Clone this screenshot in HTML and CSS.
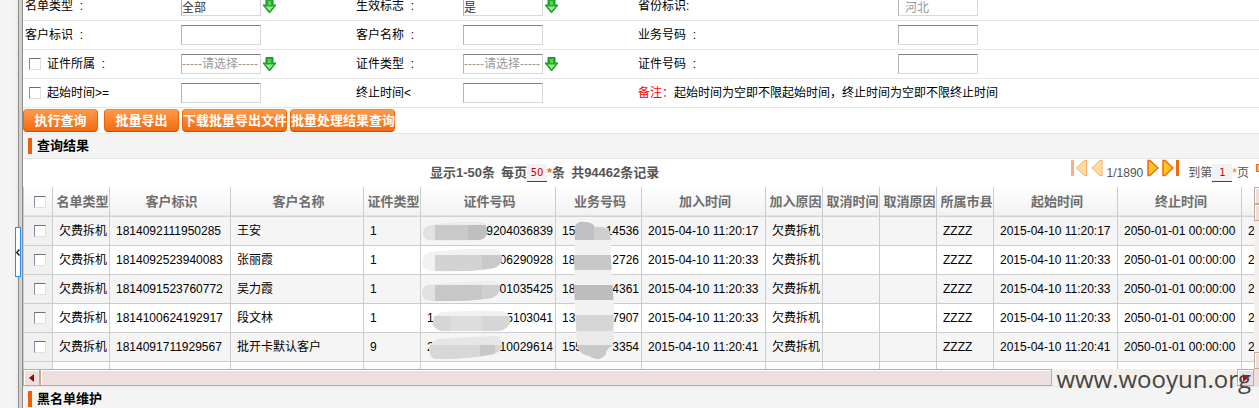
FILE: index.html
```
<!DOCTYPE html>
<html lang="zh-CN">
<head>
    <meta charset="UTF-8">
    <meta name="viewport" content="width=device-width, initial-scale=1.0">
    <title>名单管理</title>
    <link rel="stylesheet" href="styles.css">
</head>
<body>
<div class="page">
    <div class="side"></div>
    <div class="splitter"><button class="split-handle" type="button" aria-label="收起"><svg width="4" height="7" viewBox="0 0 4 7"><path d="M3.5 .5L.8 3.5l2.7 3" fill="none" stroke="#123" stroke-width="1.4"/></svg></button></div>
    <main class="main">
        <form class="query">
            <div class="row">
                <label for="list_type">名单类型  :</label>
                <div class="field"><input id="list_type" value="全部"><svg class="arrow" viewBox="0 0 13 15"><path d="M3 .5h7v5.500h3L6.500 14 0 6h3z" fill="#1fae2b" stroke="#0f9a26"/><path d="M5 2h3v4H5z" fill="#5fcf4e"/><path d="M2.500 7.500h8L6.500 12z" fill="#9be88a"/></svg></div>
                <label for="valid_flag">生效标志  :</label>
                <div class="field"><input id="valid_flag" value="是"><svg class="arrow" viewBox="0 0 13 15"><path d="M3 .5h7v5.500h3L6.500 14 0 6h3z" fill="#1fae2b" stroke="#0f9a26"/><path d="M5 2h3v4H5z" fill="#5fcf4e"/><path d="M2.500 7.500h8L6.500 12z" fill="#9be88a"/></svg></div>
                <label for="province">省份标识:</label>
                <div class="field"><input id="province" class="province" value="河北"></div>
            </div>
            <div class="row">
                <label for="cust_id">客户标识  :</label>
                <div class="field"><input id="cust_id"></div>
                <label for="cust_name">客户名称  :</label>
                <div class="field"><input id="cust_name"></div>
                <label for="serial_no">业务号码  :</label>
                <div class="field"><input id="serial_no"></div>
            </div>
            <div class="row">
                <label class="check"><input type="checkbox">证件所属  :</label>
                <div class="field"><input aria-label="证件所属" placeholder="-----请选择-----"><svg class="arrow" viewBox="0 0 13 15"><path d="M3 .5h7v5.500h3L6.500 14 0 6h3z" fill="#1fae2b" stroke="#0f9a26"/><path d="M5 2h3v4H5z" fill="#5fcf4e"/><path d="M2.500 7.500h8L6.500 12z" fill="#9be88a"/></svg></div>
                <label for="cert_type">证件类型  :</label>
                <div class="field"><input id="cert_type" placeholder="-----请选择-----"><svg class="arrow" viewBox="0 0 13 15"><path d="M3 .5h7v5.500h3L6.500 14 0 6h3z" fill="#1fae2b" stroke="#0f9a26"/><path d="M5 2h3v4H5z" fill="#5fcf4e"/><path d="M2.500 7.500h8L6.500 12z" fill="#9be88a"/></svg></div>
                <label for="cert_no">证件号码  :</label>
                <div class="field"><input id="cert_no"></div>
            </div>
            <div class="row">
                <label class="check"><input type="checkbox">起始时间&gt;=</label>
                <div class="field"><input aria-label="起始时间"></div>
                <label for="end_time">终止时间&lt;</label>
                <div class="field"><input id="end_time"></div>
                <p class="remark"><b>备注：</b>起始时间为空即不限起始时间，终止时间为空即不限终止时间</p>
            </div>
            <div class="buttons">
                <button class="btn" type="button">执行查询</button>
                <button class="btn" type="button">批量导出</button>
                <button class="btn btn-wide" type="button">下载批量导出文件</button>
                <button class="btn btn-wide" type="button">批量处理结果查询</button>
            </div>
        </form>

        <h2 class="title">查询结果</h2>

        <div class="pager">
            <div class="summary">
                <span>显示1-50条</span>
                <span class="per">每页<input aria-label="每页条数" value="50"><i>*</i>条</span>
                <span>共94462条记录</span>
            </div>
            <div class="nav">
                <a href="#" class="off" aria-label="首页"><svg width="17" height="18" viewBox="0 0 17 18"><path d="M1.500 1v16" stroke="#f9b080" stroke-width="3"/><path d="M15.500 1.500v15h-2L5.500 9l8-7.500z" fill="#ffdf9c" stroke="#f9a86c"/></svg></a>
                <a href="#" class="off" aria-label="上一页"><svg width="12" height="18" viewBox="0 0 12 18"><path d="M11 1.500v15H9L1 9l8-7.500z" fill="#ffdf9c" stroke="#f9a86c"/></svg></a>
                <span class="count">1/1890</span>
                <a href="#" aria-label="下一页"><svg width="12" height="18" viewBox="0 0 12 18"><path d="M1 1.500v15h2L11 9 3 1.500z" fill="#ffc526" stroke="#f26a10" stroke-width="1.500"/></svg></a>
                <a href="#" aria-label="末页"><svg width="17" height="18" viewBox="0 0 17 18"><path d="M1 1.500v15h2L11 9 3 1.500z" fill="#ffc526" stroke="#f26a10" stroke-width="1.500"/><path d="M15.500 1v16" stroke="#f26a10" stroke-width="3"/></svg></a>
                <span class="goto">到第<input aria-label="页码" value="1"><i>*</i>页</span>
                <button class="go" type="button" aria-label="跳转"></button>
            </div>
        </div>

        <div class="grid">
            <div class="grid-view">
                <table>
                    <colgroup>
                        <col class="w-check"><col class="w-short"><col class="w-id"><col class="w-name"><col class="w-short"><col class="w-cert"><col class="w-serial"><col class="w-time"><col class="w-short"><col class="w-short"><col class="w-short"><col class="w-short"><col class="w-time"><col class="w-time"><col class="w-time">
                    </colgroup>
                    <thead>
                    <tr><th><input type="checkbox" aria-label="全选"></th><th>名单类型</th><th>客户标识</th><th>客户名称</th><th>证件类型</th><th>证件号码</th><th>业务号码</th><th>加入时间</th><th>加入原因</th><th>取消时间</th><th>取消原因</th><th>所属市县</th><th>起始时间</th><th>终止时间</th><th></th></tr>
                    </thead>
                    <tbody>
                    <tr><td><input type="checkbox" aria-label="选择"></td><td>欠费拆机</td><td>1814092111950285</td><td>王安</td><td>1</td><td class="num">9204036839</td><td class="tel"><span>15</span><span>14536</span></td><td>2015-04-10 11:20:17</td><td>欠费拆机</td><td></td><td></td><td>ZZZZ</td><td>2015-04-10 11:20:17</td><td>2050-01-01 00:00:00</td><td>2</td></tr>
                    <tr><td><input type="checkbox" aria-label="选择"></td><td>欠费拆机</td><td>1814092523940083</td><td>张丽霞</td><td>1</td><td class="num">06290928</td><td class="tel"><span>18</span><span>2726</span></td><td>2015-04-10 11:20:33</td><td>欠费拆机</td><td></td><td></td><td>ZZZZ</td><td>2015-04-10 11:20:33</td><td>2050-01-01 00:00:00</td><td>2</td></tr>
                    <tr><td><input type="checkbox" aria-label="选择"></td><td>欠费拆机</td><td>1814091523760772</td><td>吴力霞</td><td>1</td><td class="num">01035425</td><td class="tel"><span>18</span><span>4361</span></td><td>2015-04-10 11:20:33</td><td>欠费拆机</td><td></td><td></td><td>ZZZZ</td><td>2015-04-10 11:20:33</td><td>2050-01-01 00:00:00</td><td>2</td></tr>
                    <tr><td><input type="checkbox" aria-label="选择"></td><td>欠费拆机</td><td>1814100624192917</td><td>段文林</td><td>1</td><td class="tel"><span>1</span><span>5103041</span></td><td class="tel"><span>131</span><span>7907</span></td><td>2015-04-10 11:20:33</td><td>欠费拆机</td><td></td><td></td><td>ZZZZ</td><td>2015-04-10 11:20:33</td><td>2050-01-01 00:00:00</td><td>2</td></tr>
                    <tr><td><input type="checkbox" aria-label="选择"></td><td>欠费拆机</td><td>1814091711929567</td><td>批开卡默认客户</td><td>9</td><td class="tel"><span>2</span><span>10029614</span></td><td class="tel"><span>155</span><span>3354</span></td><td>2015-04-10 11:20:41</td><td>欠费拆机</td><td></td><td></td><td>ZZZZ</td><td>2015-04-10 11:20:41</td><td>2050-01-01 00:00:00</td><td>2</td></tr>
                    <tr><td></td><td></td><td></td><td></td><td></td><td></td><td></td><td></td><td></td><td></td><td></td><td></td><td></td><td></td><td></td></tr>
                    </tbody>
                </table>
                <!-- masks over the private numbers -->
                <svg class="mask" width="230" height="150" viewBox="0 0 230 150">
                    <defs>
                        <clipPath id="m1"><path d="M9 12Q1 14 1 20t6 7l15 1 33-1q10 0 10-9 0-8-6-9-20-1-50 3z"/></clipPath>
                        <clipPath id="m2"><path d="M9 39Q0 41 0 49t10 9q34 2 62-3 8-3 8-11 0-7-7-8-24-1-64 3z"/></clipPath>
                        <clipPath id="m3"><path d="M8 71Q0 73 0 80t9 8q36 1 60-3 9-3 9-11 0-7-7-6-27 0-63 3z"/></clipPath>
                        <clipPath id="m4"><path d="M20 99q-9 2-9 10 0 8 9 9l57 0q11-2 11-11 0-9-10-9-25-1-58 1z"/></clipPath>
                        <clipPath id="m5"><path d="M16 126q-8 3-9 10 0 10 9 10 32 0 56-5 8-3 8-10 0-8-8-8-28 1-56 3z"/></clipPath>
                        <clipPath id="m6"><path d="M153 13q3-5 10-4 7 0 10 5 12-1 15 5l1 12v15l3 50-1 36q-7 4-7 9-7 9-17 2-10-2-12-10l-3-60z"/></clipPath>
                    </defs>
                    <g clip-path="url(#m1)"><path d="M0 0h80v40H0z" fill="#ececec"/><path d="M0 12h13v20H0z" fill="#e2e2e2"/><path d="M13 12h65v15H13z" fill="#c9c9ca"/><path d="M46 12h34v15H46z" fill="#bfbfc1"/></g>
                    <g clip-path="url(#m2)"><path d="M0 30h90v35H0z" fill="#f2f2f2"/><path d="M13 42h70v16H13z" fill="#d3d3d4"/><path d="M60 42h25v16H60z" fill="#cac8ca"/></g>
                    <g clip-path="url(#m3)"><path d="M0 65h90v30H0z" fill="#eee"/><path d="M0 72h13v20H0z" fill="#e2e2e2"/><path d="M13 72h70v16H13z" fill="#c7c7ca"/><path d="M60 72h25v16H60z" fill="#d0ced0"/></g>
                    <g clip-path="url(#m4)"><path d="M0 95h95v30H0z" fill="#f0f0f0"/><path d="M10 103h82v15H10z" fill="#d6d6d6"/><path d="M28 103h32v15H28z" fill="#ddd"/></g>
                    <g clip-path="url(#m5)"><path d="M0 120h95v30H0z" fill="#e6e6e6"/><path d="M8 132h80v15H8z" fill="#d7d7d8"/><path d="M58 132h15v12H58z" fill="#c9c7c9"/></g>
                    <g clip-path="url(#m6)"><path d="M140 0h60v150h-60z" fill="#f2f2f2"/><path d="M140 5h32v22h-32z" fill="#c0c0c2"/><path d="M172 5h30v22h-30z" fill="#cfcfcf"/><path d="M140 42h60v15h-60z" fill="#c8c8ca"/><path d="M140 72h60v15h-60z" fill="#bdbdc0"/><path d="M140 102h60v16h-60z" fill="#d5d5d5"/><path d="M140 118h60v14h-60z" fill="#eaeaea"/><path d="M140 132h60v15h-60z" fill="#c9c9ca"/></g>
                </svg>
            </div>
            <div class="vbar"><div class="vbtn"></div><div class="vbtn"></div><div class="vtrack"></div><div class="vbtn"></div></div>
        </div>
        <div class="hbar">
            <div class="hbtn"><svg width="5" height="8" viewBox="0 0 5 8"><path d="M5 0v8L0 4z" fill="#a00"/></svg></div>
            <div class="hthumb"></div>
            <div class="htrack"></div>
            <div class="hbtn"><svg width="5" height="8" viewBox="0 0 5 8"><path d="M0 0v8l5-4z" fill="#c00020"/></svg></div>
            <div class="corner"></div>
        </div>

        <h2 class="title">黑名单维护</h2>
    </main>
</div>
<div class="watermark">www.wooyun.org</div>
</body>
</html>
```

FILE: styles.css
```
* {
    box-sizing: border-box;
}

body {
    margin: 0;
    height: 100vh;
    overflow: hidden;
    position: relative;
    background: #fff;
    color: #000;
    font: 12px/16px "Liberation Sans", "Noto Sans CJK SC", sans-serif;
}

.page {
    display: flex;
    height: 100%;
}

.side {
    flex: 0 0 18px;
    background: linear-gradient(90deg, #f4f4f4 80%, #eaeaea);
}

.splitter {
    flex: 0 0 5px;
    position: relative;
    background: #d4d0c8;
    border-left: 1px solid #8c8c8c;
    border-right: 1px solid #8c8c8c;
}

.split-handle {
    position: absolute;
    left: -4px;
    top: 227px;
    width: 6px;
    height: 50px;
    padding: 0;
    border: 1px solid #1e90ff;
    background: #fff;
    display: flex;
    align-items: center;
    justify-content: center;
}

.main {
    flex: 1;
    min-width: 0;
    overflow: hidden;
    background: #f5f5f5;
}

/* query form */
.query {
    margin-top: -8px;
    background: #fff;
}

.row {
    display: grid;
    grid-template-columns: 156px 175px 107px 175px 260px 1fr;
    align-items: center;
    height: 29px;
    border-bottom: 1px solid #e6e6e6;
}

.row label,
.row .field,
.remark {
    padding-left: 2px;
    white-space: pre;
}

.field {
    display: flex;
    align-items: center;
    gap: 2px;
}

.field input {
    width: 80px;
    height: 20px;
    padding: 0;
    border: 1px solid #d8d8d8;
    border-top-color: #808080;
    border-left-color: #b4b4b4;
    background: #fff;
    color: #333;
    font: inherit;
}

.field input::placeholder {
    color: #999;
}

.field .province {
    padding-left: 6px;
    color: #999;
}

.arrow {
    width: 13px;
    height: 15px;
}

input[type=checkbox] {
    appearance: none;
    width: 12px;
    height: 12px;
    margin: 0;
    border: 1px solid #e0e0e0;
    border-top-color: #707070;
    border-left-color: #8a8aa0;
    background: #fff;
}

.row .check {
    display: flex;
    align-items: center;
    gap: 6px;
    padding-left: 6px;
}

.remark {
    grid-column: 5 / 7;
    margin: 0;
}

.remark b {
    color: #f00;
    font-weight: normal;
}

.buttons {
    display: flex;
    gap: 3px;
    height: 25px;
    padding-top: 1px;
}

.btn {
    width: 75px;
    height: 23px;
    margin-right: 3px;
    padding: 0;
    border: 1px solid #e8660c;
    border-top-color: #f58a3c;
    border-bottom-color: #c84c00;
    border-radius: 4px;
    background: linear-gradient(#ff9a4a, #f26a10);
    color: #fff;
    font: bold 13px/20px "Liberation Sans", "Noto Sans CJK SC", sans-serif;
    white-space: nowrap;
}

.btn + .btn,
.btn-wide {
    margin-right: 0;
}

.btn-wide {
    width: 105px;
}

.title {
    display: flex;
    align-items: center;
    gap: 5px;
    height: 26px;
    margin: 0;
    padding-left: 5px;
    border-top: 1px solid #e8e8e8;
    border-bottom: 1px solid #e8e8e8;
    background: #f4f4f4;
    font-size: 13px;
}

.title::before {
    content: "";
    width: 4px;
    height: 16px;
    background: #f06000;
}

/* pager */
.pager {
    display: flex;
    justify-content: flex-end;
    height: 28px;
    background: #fff;
    color: #555;
    overflow: hidden;
}

.pager input {
    width: 20px;
    height: 18px;
    padding: 0;
    border: 0;
    border-bottom: 1px solid #444;
    background: #f2f2f2;
    color: #c00;
    font: 10px "DejaVu Sans", sans-serif;
    text-align: center;
}

.pager i {
    color: #f07000;
    font-style: normal;
}

.summary {
    display: flex;
    align-items: center;
    gap: 6px;
    margin-right: auto;
    padding-left: 407px;
    font-size: 13px;
    font-weight: bold;
}

.per,
.goto {
    display: flex;
    align-items: center;
}

.nav {
    display: flex;
    align-items: center;
    gap: 3px;
    white-space: nowrap;
}

.nav a {
    height: 28px;
}

.nav svg {
    display: block;
}

.count {
    padding: 0 1px;
}

.goto {
    margin-left: 6px;
}

.go {
    width: 3px;
    height: 8px;
    margin: 0 0 10px 4px;
    padding: 0;
    border: 1px solid #f26a10;
    border-right: 0;
    background: #ffb060;
}

/* result grid */
.grid {
    display: flex;
    height: 182px;
}

.grid-view {
    position: relative;
    flex: 1;
    min-width: 0;
    overflow: hidden;
    border-left: 1px solid #ccc;
    background: #fff;
}

table {
    width: 1342px;
    table-layout: fixed;
    border-collapse: separate;
    border-spacing: 0;
}

.w-check { width: 29px; }
.w-short { width: 57px; }
.w-id { width: 121px; }
.w-name { width: 133px; }
.w-cert { width: 135px; }
.w-serial { width: 86px; }
.w-time { width: 124px; }

th,
td {
    height: 29px;
    padding: 0 0 0 6px;
    border-right: 1px solid #ccc;
    border-bottom: 1px solid #ccc;
    text-align: left;
    white-space: nowrap;
}

th {
    height: 30px;
    padding: 0 0 0 3px;
    border-bottom-color: #c8d4d8;
    background: linear-gradient(#fff, #f1f1f1);
    color: #6e6e6e;
    font-size: 13px;
    text-align: center;
    box-shadow: inset 0 -1px #cdeaf0;
}

tbody tr:nth-child(odd) {
    background: #f5f5f5;
}

tbody td:first-child {
    padding: 0 0 0 3px;
    background: #f0f0f0;
}

th input,
td input {
    display: block;
}

table input[type=checkbox] {
    margin: 0 auto;
}

td.num {
    padding-right: 2px;
    text-align: right;
}

td.tel {
    padding-right: 2px;
}

.tel span + span {
    float: right;
}

/* drawn over the number columns */
.mask {
    position: absolute;
    left: 398px;
    top: 26px;
}

/* scroll bars */
.vbar {
    display: flex;
    flex-direction: column;
    flex: 0 0 5px;
    background: #f3efec;
}

.vbtn {
    height: 17px;
    border: 1px solid #c8a890;
    border-right: 0;
    background: #ecdede;
    box-shadow: inset 1px 1px #fff;
}

.vtrack {
    flex: 1;
}

.hbar {
    display: flex;
    height: 17px;
    background: #f3efea;
}

.hbtn,
.hthumb {
    border: 1px solid #c8a890;
    background: #ecdfde;
    box-shadow: inset 1px 1px #fff;
}

.hbtn {
    flex: 0 0 17px;
    display: flex;
    align-items: center;
    justify-content: center;
}

.hthumb {
    flex: 1012;
}

.htrack {
    flex: 185;
}

.corner {
    flex: 0 0 5px;
    background: #ecdfde;
}

.watermark {
    position: absolute;
    right: 8px;
    bottom: 12px;
    color: #444;
    font: 24px/34px "Open Sans", "Noto Sans", sans-serif;
}
```
